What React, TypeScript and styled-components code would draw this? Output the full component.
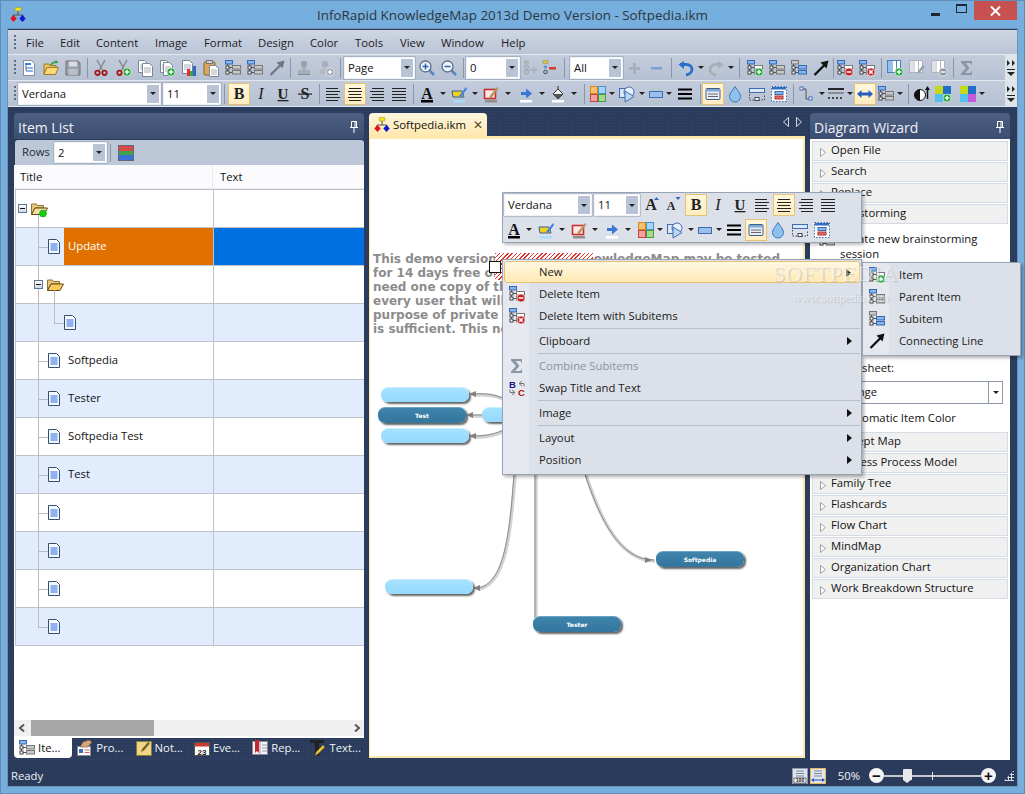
import React from 'react';
import styled, { createGlobalStyle } from 'styled-components';

const UI = '"Open Sans", "Noto Sans", sans-serif';
const TEXT_SIZE = '11.3px';

const GlobalStyle = createGlobalStyle`
  html, body { margin: 0; padding: 0; }
  body { width: 1025px; height: 794px; overflow: hidden; font-family: ${UI}; }
`;

/* ---------- icon drawings (16x16) ---------- */
const BLUE = '#86b6f0';
const GREY = '#c9c9c9';

const tree = (a: string, b: string, c: string) => (
  <>
    <rect x="0.5" y="0.5" width="7" height="3.5" fill={a} stroke={a === BLUE ? '#3a68ae' : '#777'} />
    <path d="M2.5 4v8M2.5 7.5h5M2.5 12.5h5" stroke="#555" fill="none" />
    <rect x="1" y="6" width="3" height="3" fill="#fff" stroke="#444" />
    <rect x="1" y="11" width="3" height="3" fill="#fff" stroke="#444" />
    <rect x="7.5" y="5.5" width="8" height="3.5" fill={b} stroke={b === BLUE ? '#3a68ae' : '#777'} />
    <rect x="7.5" y="10.5" width="8" height="3.5" fill={c} stroke={c === BLUE ? '#3a68ae' : '#777'} />
  </>
);
const badge = (fill: string, glyph: string) => (
  <>
    <circle cx="12" cy="12" r="4" fill={fill} stroke="#fff" strokeWidth="0.6" />
    <path d={glyph} stroke="#fff" strokeWidth="1.5" fill="none" />
  </>
);
const PLUS = 'M9.7 12h4.6M12 9.7v4.6';
const MINUS = 'M9.7 12h4.6';
const CROSS = 'M10.3 10.3l3.4 3.4M13.7 10.3l-3.4 3.4';
const page = (x: number, y: number, w: number, h: number) => (
  <>
    <path d={`M${x + 0.5} ${y + 0.5}h${w - 3}l3 3v${h - 3}h-${w}z`} fill="#fff" stroke="#7b8796" />
    <path d={`M${x + 2} ${y + 5}h${w - 3}M${x + 2} ${y + 7}h${w - 3}M${x + 2} ${y + 9}h${w - 3}`} stroke="#a8b0bb" />
  </>
);
const scissors = (
  <>
    <path d="M4 0l5.5 10M12 0L6.5 10" stroke="#83878d" strokeWidth="1.4" fill="none" />
    <circle cx="4.5" cy="12.8" r="2.2" stroke="#a31515" strokeWidth="1.8" fill="none" />
    <circle cx="11.5" cy="12.8" r="2.2" stroke="#a31515" strokeWidth="1.8" fill="none" />
  </>
);
const arrow = (c: string) => (
  <>
    <path d="M1.5 15L11 5.5" stroke={c} strokeWidth="2.3" />
    <path d="M7.5 2.5L15.5.5 13.5 8.5z" fill={c} />
  </>
);
const lines = (d: string) => <path d={d} stroke="#222" strokeWidth="1" fill="none" />;
const letter = (t: string, style: 'b' | 'i' | 'plain', size = 15) => (
  <text
    x="8"
    y="12.5"
    textAnchor="middle"
    fontFamily="'Liberation Serif', serif"
    fontSize={size}
    fontWeight={style === 'b' ? 700 : 400}
    fontStyle={style === 'i' ? 'italic' : 'normal'}
    fill="#222"
  >
    {t}
  </text>
);
const columns = (c: string) => (
  <>
    <rect x="0.5" y="0.5" width="13" height="12" fill="#fff" stroke={c} />
    <path d="M5 1v11M9.5 1v11" stroke={c} />
    <rect x="1" y="1" width="3.5" height="11" fill={c === '#aeb4bd' ? '#dfe2e6' : '#8fc0f2'} />
  </>
);
const tray = (c: string) => <rect x="2" y="14" width="12" height="2.5" fill={c} />;

const icons: Record<string, React.ReactNode> = {
  newdoc: (
    <>
      <path d="M2.5.5h8l3 3v12h-11z" fill="#fff" stroke="#7f8da0" />
      <rect x="4" y="3" width="6" height="2" fill="#3f7fe0" />
      <path d="M5 5v6M5 8h2M5 11h2" stroke="#667" />
      <rect x="7" y="7" width="5" height="2" fill="#86b6f0" />
      <rect x="7" y="10" width="5" height="2" fill="#86b6f0" />
    </>
  ),
  open: (
    <>
      <path d="M1 4h5l1 1.5h6V8H4l-3 6z" fill="#e9c45c" stroke="#a07a20" />
      <path d="M.8 14.5L4 7.5h11.5L12.5 14.5z" fill="#fcd977" stroke="#a07a20" />
      <path d="M8 5C9 2.5 11 2 13 2" stroke="#2fa33a" strokeWidth="1.5" fill="none" />
      <path d="M12.5 0l3 2-3 2z" fill="#2fa33a" />
    </>
  ),
  save: (
    <>
      <path d="M1 1h12l2 2v12H1z" fill="#9aa0a8" stroke="#6b7078" />
      <rect x="4" y="1.5" width="8" height="5" fill="#dadce0" />
      <rect x="3.5" y="9" width="9" height="6" fill="#bcc0c6" />
    </>
  ),
  cut: scissors,
  cutadd: (
    <>
      {scissors}
      {badge('#17a52b', PLUS)}
    </>
  ),
  copy: (
    <>
      {page(1, 0, 9, 12)}
      {page(5, 3, 10, 13)}
    </>
  ),
  copyadd: (
    <>
      {page(1, 0, 9, 12)}
      {page(4, 2, 9, 13)}
      {badge('#17a52b', PLUS)}
    </>
  ),
  pastechart: (
    <>
      {page(1, 0, 10, 13)}
      <rect x="6" y="9" width="3" height="7" fill="#d33" />
      <rect x="9" y="11" width="3" height="5" fill="#3a3" />
      <rect x="12" y="6" width="3" height="10" fill="#36c" />
    </>
  ),
  paste: (
    <>
      <rect x="1" y="2" width="11" height="13" rx="1" fill="#d9a85f" stroke="#8b6428" />
      <rect x="3.5" y="0.5" width="6" height="3" fill="#c9cfd6" stroke="#777" />
      {page(6, 5, 9, 11)}
    </>
  ),
  treeA: tree(BLUE, GREY, GREY),
  treeB: tree(GREY, BLUE, BLUE),
  treeAdd: (
    <>
      {tree(BLUE, '#fff', '#fff')}
      {badge('#17a52b', PLUS)}
    </>
  ),
  treeDel: (
    <>
      {tree(BLUE, '#fff', '#fff')}
      {badge('#c81e1e', MINUS)}
    </>
  ),
  treeX: (
    <>
      {tree(BLUE, '#fff', '#fff')}
      {badge('#c81e1e', CROSS)}
    </>
  ),
  arrowGrey: arrow('#6f7782'),
  arrowBlack: arrow('#111'),
  stamp: (
    <>
      <circle cx="8" cy="4" r="3.2" fill="#9aa1ab" />
      <path d="M6.5 7h3l1 3h3.5v3H2v-3h3.5z" fill="#a9afb8" />
      <rect x="2" y="13.5" width="12" height="1.5" fill="#858b95" />
    </>
  ),
  stampadd: (
    <>
      <circle cx="7" cy="4" r="3.2" fill="#a9afb8" />
      <path d="M1 14c0-4 2-6 6-6s5 2 5 3v3z" fill="#b6bbc3" />
      {badge('#98a0ab', PLUS)}
    </>
  ),
  zoomin: (
    <>
      <path d="M10 10l5 5" stroke="#5a84c4" strokeWidth="2.6" />
      <circle cx="6.5" cy="6.5" r="5.5" fill="#eef4fb" stroke="#5c6f88" strokeWidth="1.3" />
      <path d="M3.5 6.5h6M6.5 3.5v6" stroke="#2a62b8" strokeWidth="1.5" />
    </>
  ),
  zoomout: (
    <>
      <path d="M10 10l5 5" stroke="#5a84c4" strokeWidth="2.6" />
      <circle cx="6.5" cy="6.5" r="5.5" fill="#eef4fb" stroke="#5c6f88" strokeWidth="1.3" />
      <path d="M3.5 6.5h6" stroke="#2a62b8" strokeWidth="1.5" />
    </>
  ),
  nodesGrey: (
    <>
      <rect x="2" y="0.5" width="5" height="3" fill="#aab0b8" />
      <circle cx="4.5" cy="7" r="2" fill="none" stroke="#9aa0a8" />
      <circle cx="4.5" cy="12" r="2" fill="none" stroke="#9aa0a8" />
      <path d="M7 9h4V7h2v2h2v2h-2v2h-2v-2H7z" fill="#aeb3ba" />
    </>
  ),
  nodesMinus: (
    <>
      <rect x="2" y="0.5" width="5" height="3" fill="#e8c22c" stroke="#888" strokeWidth="0.5" />
      <circle cx="4.5" cy="7" r="1.8" fill="#6a95d8" />
      <circle cx="4.5" cy="12" r="1.8" fill="none" stroke="#445" />
      <rect x="8" y="7" width="7" height="2.5" fill="#d8392b" />
    </>
  ),
  plusMuted: <path d="M6 3h3v4h4v3H9v4H6v-4H2V7h4z" fill="#a9afb9" />,
  minusMuted: <rect x="2" y="7" width="11" height="2.5" fill="#7e9fd6" />,
  undo: (
    <>
      <path d="M2 4.5h6.5C12 4.5 14 7 14 9.5S11.5 14.5 8 15" stroke="#2a6fc9" strokeWidth="2.8" fill="none" />
      <path d="M.5 4.5L6 1v8z" fill="#2a6fc9" />
    </>
  ),
  redo: (
    <>
      <path d="M14 4.5H7.5C4 4.5 2 7 2 9.5S4.5 14.5 8 15" stroke="#a9aeb6" strokeWidth="2.8" fill="none" />
      <path d="M15.5 4.5L10 1v8z" fill="#a9aeb6" />
    </>
  ),
  colAdd: (
    <>
      {columns('#4a7fbe')}
      {badge('#17a52b', PLUS)}
    </>
  ),
  colEdit: (
    <>
      {columns('#aeb4bd')}
      <path d="M8 14l1-3 5-6 2 1.5-5 6z" fill="#9aa0a9" />
    </>
  ),
  colMinus: (
    <>
      {columns('#aeb4bd')}
      {badge('#8f959e', MINUS)}
    </>
  ),
  sigma: <path d="M2 1h11v4.5L11.5 3H6.5l4 5-4.5 5h5.5l1.5-2.5V15H2v-1.5l5-5.5-5-5.5z" fill="#8b95a3" />,
  bold: letter('B', 'b', 16),
  italic: letter('I', 'i', 16),
  under: (
    <>
      {letter('U', 'b', 15)}
      <rect x="2.5" y="14" width="11" height="1.3" fill="#222" />
    </>
  ),
  strike: (
    <>
      {letter('S', 'b', 16)}
      <rect x="1" y="7.5" width="14" height="1.2" fill="#222" />
    </>
  ),
  growA: (
    <>
      {letter('A', 'b', 16)}
      <path d="M11 3l2.5-3L16 3z" fill="#3568b8" />
    </>
  ),
  shrinkA: (
    <>
      <text x="6" y="13" textAnchor="middle" fontFamily="'Liberation Serif', serif" fontSize="12" fontWeight="700" fill="#222">A</text>
      <path d="M10.5 0h5L13 3z" fill="#3568b8" />
    </>
  ),
  alignL: lines('M1 2.5h12M1 5.5h14M1 8.5h12M1 11.5h14M1 14.5h12'),
  alignC: lines('M2 2.5h12M1 5.5h14M2 8.5h12M1 11.5h14M2 14.5h12'),
  alignR: lines('M3 2.5h12M1 5.5h14M3 8.5h12M1 11.5h14M3 14.5h12'),
  alignJ: lines('M1 2.5h14M1 5.5h14M1 8.5h14M1 11.5h14M1 14.5h14'),
  fontA: (
    <>
      <text x="8" y="12.5" textAnchor="middle" fontFamily="'Liberation Serif', serif" fontSize="16" fontWeight="700" fill="#111">A</text>
      {tray('#000')}
    </>
  ),
  hilite: (
    <>
      <path d="M1 5h10l2 6H2z" fill="#f0d21e" stroke="#365a9a" />
      <path d="M8 10l7-9 1 2-6 8z" fill="#3f7fe0" />
      {tray('#a7dcfb')}
    </>
  ),
  penbox: (
    <>
      <rect x="1.5" y="3.5" width="11" height="9" fill="#fbe9e9" stroke="#c73030" strokeWidth="1.6" />
      <path d="M6 11l8-10 1.5 1.5-7 9.5z" fill="#b9935a" />
      {tray('#8f8f8f')}
    </>
  ),
  arrowFill: (
    <>
      <path d="M3 6h5V2.5L14 7.5l-6 5V9H3z" fill="#3a78d8" />
      {tray('#fff')}
    </>
  ),
  bucket: (
    <>
      <path d="M3 8l5-5 5 5-5 5z" fill="#f2f2f2" stroke="#333" />
      <path d="M3 8h10l-5 5z" fill="#555" />
      <path d="M8 0v4" stroke="#333" />
      {tray('#fff')}
    </>
  ),
  grid4: (
    <>
      <rect x="0.5" y="0.5" width="7" height="7" fill="#f5c16c" stroke="#d08a22" />
      <rect x="8.5" y="0.5" width="7" height="7" fill="#a8d4f7" stroke="#4a90d0" />
      <rect x="0.5" y="8.5" width="7" height="7" fill="#f2a0a0" stroke="#c84040" />
      <rect x="8.5" y="8.5" width="7" height="7" fill="#a4d88f" stroke="#4a9a40" />
    </>
  ),
  shape: (
    <>
      <rect x="0.5" y="2.5" width="9" height="9" fill="#dbe8f8" stroke="#3f6db3" />
      <circle cx="10" cy="6" r="5" fill="#eaf2fb" stroke="#3f6db3" />
      <path d="M6 5l9 5.5-9 5.5z" fill="#bcd6f3" stroke="#3f6db3" />
    </>
  ),
  flatRect: <rect x="1.5" y="5.5" width="13" height="6" fill="#9cc0ec" stroke="#3f6db3" />,
  thick: <path d="M1 3.5h14M1 8h14M1 12.5h14" stroke="#000" strokeWidth="2.2" />,
  card: (
    <>
      <rect x="1" y="2.5" width="14" height="11" rx="1" fill="#e9eef4" stroke="#3f5f8a" />
      <rect x="1.5" y="3" width="13" height="2.5" fill="#7fa6d8" />
      <path d="M3 8h10M3 10.5h10" stroke="#667" />
    </>
  ),
  water: <path d="M8 .5C10 4 13.5 7 13.5 10.5a5.5 5.5 0 0 1-11 0C2.5 7 6 4 8 .5z" fill="#8fc1ef" stroke="#3b78bf" />,
  layoutA: (
    <>
      <rect x="0.5" y="2.5" width="15" height="4" fill="#dbe8f8" stroke="#3f6db3" />
      <path d="M.5 8v6h15V8" fill="none" stroke="#445" strokeDasharray="1.5 1.5" />
      <rect x="6" y="11.5" width="4" height="3" fill="#fff" stroke="#445" />
    </>
  ),
  layoutB: (
    <>
      <rect x="0.5" y="0.5" width="15" height="15" fill="#fff" stroke="#3f6db3" strokeDasharray="1.5 1.5" />
      <rect x="1" y="1" width="14" height="2.5" fill="#2f6dbf" />
      <rect x="4" y="5.5" width="8" height="3" fill="#86b6f0" stroke="#3f6db3" />
      <rect x="4" y="10" width="8" height="3" fill="#e07070" stroke="#b03030" />
    </>
  ),
  connector: (
    <>
      <rect x="1" y="1" width="3" height="3" fill="#fff" stroke="#3f6db3" />
      <path d="M4 3h3v10h3" stroke="#555" fill="none" />
      <rect x="10" y="11" width="3" height="3" fill="#fff" stroke="#3f6db3" />
    </>
  ),
  lineStyle: (
    <>
      <path d="M0 3h16" stroke="#111" strokeWidth="1.8" />
      <path d="M0 7h16" stroke="#555" />
      <path d="M0 12h16" stroke="#444" strokeDasharray="2 2" strokeWidth="2" />
    </>
  ),
  hArrows: <path d="M0 8l4.5-4v2.5h7V4L16 8l-4.5 4V9.5h-7V12z" fill="#2a5fc0" />,
  contrast: (
    <>
      <circle cx="6" cy="9" r="5.5" fill="#fff" stroke="#111" />
      <path d="M6 3.5a5.5 5.5 0 0 0 0 11z" fill="#111" />
      <path d="M13.5 13V3" stroke="#111" strokeWidth="1.5" />
      <path d="M11 4l2.5-4L16 4z" fill="#111" />
    </>
  ),
  colorAdd: (
    <>
      <rect x="0" y="0" width="8" height="8" fill="#c6d81a" />
      <rect x="8" y="0" width="8" height="8" fill="#1f6fc8" />
      <rect x="0" y="8" width="8" height="8" fill="#55c0ef" />
      {badge('#17a52b', PLUS)}
    </>
  ),
  colors: (
    <>
      <rect x="0" y="0" width="8" height="8" fill="#c6d81a" />
      <rect x="8" y="0" width="8" height="8" fill="#1f6fc8" />
      <rect x="0" y="8" width="8" height="8" fill="#55c0ef" />
      <rect x="8" y="8" width="8" height="8" fill="#c55ad8" />
    </>
  ),
  swap: (
    <>
      <text x="0" y="8" fontFamily="'Liberation Sans', sans-serif" fontSize="9.5" fontWeight="700" fill="#10108a">B</text>
      <text x="9" y="16" fontFamily="'Liberation Sans', sans-serif" fontSize="9.5" fontWeight="700" fill="#b01010">C</text>
      <path d="M13 1L10 3.5 13 6M10 3.5h5v3" stroke="#777" fill="none" />
      <path d="M3 15l3-2.5L3 10M6 12.5H1v-3" stroke="#777" fill="none" />
    </>
  ),
  hand: (
    <>
      <rect x="0.5" y="6.5" width="13" height="9" fill="#fff" stroke="#889" />
      <rect x="2" y="9" width="4" height="4" fill="#3f6db3" />
      <path d="M7.5 10h5M7.5 12.5h5" stroke="#c66" />
      <path d="M3 7l3-5 6-2 3 2-4 5z" fill="#d3a57a" stroke="#7a5430" strokeWidth="0.6" />
    </>
  ),
  note: (
    <>
      <rect x="0.5" y="1.5" width="15" height="14" fill="#f0d684" stroke="#8b7a40" />
      <path d="M5 12l1-3 6-7 2 1.5-6 7z" fill="#7d6330" />
    </>
  ),
  calendar: (
    <>
      <rect x="0.5" y="2.5" width="15" height="13" fill="#fff" stroke="#555" />
      <rect x="1" y="3" width="14" height="3.5" fill="#c83a32" />
      <text x="8" y="14.5" textAnchor="middle" fontFamily="'Liberation Sans', sans-serif" fontSize="8" fontWeight="700" fill="#222">23</text>
    </>
  ),
  book: (
    <>
      <rect x="0.5" y="1.5" width="15" height="13" fill="#f2f4f8" stroke="#889" />
      <path d="M8 2v12M10 5h5M10 8h5M10 11h5" stroke="#99a" />
      <path d="M3 0h4v13l-2-2-2 2z" fill="#c8252a" />
    </>
  ),
  tPen: (
    <>
      <path d="M0 0h14v3H9v13H5V3H0z" fill="#222" />
      <path d="M5 16l1-4 7-7 2 2-7 7z" fill="#e8c23a" stroke="#6a5410" strokeWidth="0.6" />
    </>
  ),
  page100: (
    <>
      <path d="M4 3h8M4 5.5h8M4 8h8" stroke="#7c8796" />
      <rect x="2" y="10" width="12" height="5" fill="#fff" stroke="#222" strokeWidth="0.6" />
      <text x="8" y="14.3" textAnchor="middle" fontFamily="'Liberation Sans', sans-serif" fontSize="5" fontWeight="700" fill="#111">100</text>
    </>
  ),
  pageFit: (
    <>
      <path d="M4 3h8M4 5.5h8M4 8h8" stroke="#7c8796" />
      <path d="M1 12l3-2v1.5h8V10l3 2-3 2v-1.5H4V14z" fill="#2a4fb8" />
    </>
  ),
};

const Icon = ({ name, size = 16 }: { name: string; size?: number }) => (
  <svg width={size} height={size} viewBox="0 0 16 16" style={{ display: 'block', overflow: 'visible', flexShrink: 0 }}>
    {icons[name]}
  </svg>
);

const Logo = () => (
  <svg width="16" height="16" viewBox="0 0 16 16" style={{ display: 'block', flexShrink: 0 }}>
    <path d="M8 4v4M3 10V8h10v2" stroke="#555" fill="none" />
    <rect x="5" y="0.5" width="6" height="3.5" rx="1" fill="#f4e21a" stroke="#9a8c10" strokeWidth="0.5" />
    <path d="M3.5 8l3.2 3.5-3.2 3.5L.3 11.5z" fill="#e0141c" />
    <path d="M12.5 8l3.2 3.5-3.2 3.5-3.2-3.5z" fill="#1414d8" />
  </svg>
);

const DocGlyph = () => (
  <svg width="12" height="15" viewBox="0 0 12 15" style={{ display: 'block', flexShrink: 0 }}>
    <path d="M.5.5h8l3 3v11H.5z" fill="#f4f8ff" stroke="#33506f" />
    <path d="M2.5 5h7M2.5 7h7M2.5 9h7M2.5 11h7" stroke="#2a6ae0" />
  </svg>
);

const FolderGlyph = ({ dot }: { dot?: boolean }) => (
  <svg width="17" height="14" viewBox="0 0 17 14" style={{ display: 'block', overflow: 'visible', flexShrink: 0 }}>
    <path d="M.5 2h5l1 1.5h6V6H4L.5 12.5z" fill="#e8c77a" stroke="#8d7434" />
    <path d="M.5 12.5L4 6h12.5L13 12.5z" fill={dot ? '#f3dda0' : '#fbc95c'} stroke="#5f4b16" />
    {dot && <circle cx="12" cy="11.5" r="3.5" fill="#12d012" stroke="#0a8a0a" strokeWidth="0.5" />}
  </svg>
);

/* ---------- window frame ---------- */
const Window = styled.div`
  position: relative;
  width: 1025px;
  height: 794px;
  display: flex;
  flex-direction: column;
  background: #76aedd;
  box-shadow: inset 0 0 0 1px #5f8db5;
  overflow: hidden;
`;

const TitleBar = styled.div`
  height: 29px;
  flex: none;
  display: grid;
  grid-template-columns: 1fr auto 1fr;
  align-items: start;
`;

const TitleLogo = styled.div`
  padding: 7px 0 0 10px;
`;

const TitleText = styled.div`
  font-size: 13.4px;
  line-height: 30px;
  color: #2c3640;
`;

const WindowButtons = styled.div`
  justify-self: end;
  display: flex;
  padding: 1px 8px 0 0;
`;

const WinButton = styled.div<{ $w: number }>`
  width: ${p => p.$w}px;
  height: 19px;
  display: flex;
  align-items: center;
  justify-content: center;
`;

const CloseButton = styled(WinButton)`
  background: #c75050;
`;

const MinGlyph = styled.div`
  width: 9px;
  height: 3px;
  background: #1c2733;
  margin-top: 7px;
`;

const MaxGlyph = styled.div`
  width: 9px;
  height: 6px;
  border: 1px solid #1c2733;
  border-top-width: 2px;
  margin-top: -4px;
`;

const Client = styled.div`
  flex: 1;
  margin: 0 8px 8px;
  display: flex;
  flex-direction: column;
  min-height: 0;
  background: #2b3b5b;
  box-shadow: 0 0 0 1px #6f93b8;
`;

/* ---------- menu and toolbars ---------- */
const MenuBar = styled.div`
  height: 25px;
  margin-top: 1px;
  display: flex;
  align-items: center;
  background: linear-gradient(#d0d6e3, #b9c4d6);
  border-bottom: 1px solid #e4e8ef;
  box-sizing: border-box;
  font-size: ${TEXT_SIZE};
  color: #1c1c1c;
`;

const Gripper = styled.div`
  flex: none;
  width: 2px;
  height: 15px;
  margin: 0 2px 0 6px;
  background: repeating-linear-gradient(#5e6b80 0 2px, transparent 2px 4px);
`;

const MenuEntry = styled.div<{ $w: number }>`
  flex: none;
  width: ${p => p.$w}px;
`;

const MenuStart = styled.div`
  width: 8px;
  flex: none;
`;

const ToolBar = styled.div`
  height: 26px;
  display: flex;
  align-items: center;
  background: linear-gradient(#c4ccdb, #b5c1d3);
  border-bottom: 1px solid #e2e6ee;
  box-sizing: border-box;
`;

const ToolEnd = styled.div`
  margin-left: auto;
  width: 12px;
  height: 100%;
  display: flex;
  flex-direction: column;
  align-items: center;
  justify-content: center;
  gap: 3px;
  background: #dfe3ea;
`;

const ToolButton = styled.div<{ $w: number; $on?: boolean }>`
  flex: none;
  box-sizing: border-box;
  width: ${p => p.$w}px;
  height: 22px;
  display: flex;
  align-items: center;
  justify-content: center;
  ${p => p.$on && 'background: linear-gradient(#fff6dc, #ffedc0); border: 1px solid #e8c274;'}
`;

const Sep = styled.div<{ $w: number }>`
  flex: none;
  width: ${p => p.$w}px;
  height: 20px;
  background: linear-gradient(#8b96a8, #8b96a8) center / 1px 100% no-repeat;
`;

const Spacer = styled.div<{ $w: number }>`
  flex: none;
  width: ${p => p.$w}px;
`;

const DropMark = styled.div<{ $w: number }>`
  flex: none;
  width: ${p => p.$w}px;
  display: flex;
  justify-content: center;
  &::after {
    content: '';
    border: 3px solid transparent;
    border-top: 3px solid #222;
    border-bottom: 0;
  }
`;

const ComboBox = styled.div<{ $w: number }>`
  flex: none;
  box-sizing: border-box;
  width: ${p => p.$w}px;
  height: 22px;
  display: flex;
  background: #fff;
  border: 1px solid #eef1f5;
  box-shadow: 0 0 0 0.5px #8d99ab;
  font-size: ${TEXT_SIZE};
  color: #111;
`;

const ComboText = styled.div`
  flex: 1;
  padding-left: 3px;
  line-height: 20px;
  white-space: nowrap;
  overflow: hidden;
`;

const ComboArrow = styled.div`
  flex: none;
  width: 12px;
  margin: 1px;
  background: #b8c4d6;
  display: flex;
  align-items: center;
  justify-content: center;
  &::after {
    content: '';
    border: 3px solid transparent;
    border-top: 3px solid #222;
    border-bottom: 0;
  }
`;

const Tools = ({ tokens }: { tokens: string }) => (
  <>
    {tokens.split(' ').map((tok, i) => {
      if (tok[0] === '|') return <Sep key={i} $w={+tok.slice(1)} />;
      if (tok[0] === '_') return <Spacer key={i} $w={+tok.slice(1)} />;
      if (tok[0] === 'v') return <DropMark key={i} $w={+(tok.split(':')[1] || 8)} />;
      if (tok[0] === '[') {
        const [label, w] = tok.slice(1, -1).split(':');
        return (
          <ComboBox key={i} $w={+w}>
            <ComboText>{label}</ComboText>
            <ComboArrow />
          </ComboBox>
        );
      }
      const on = tok[0] === '*';
      const [name, w] = tok.replace('*', '').split(':');
      return (
        <ToolButton key={i} $w={+(w || 22)} $on={on}>
          <Icon name={name} />
        </ToolButton>
      );
    })}
  </>
);

const EndMark = () => (
  <ToolEnd>
    <svg width="8" height="6" viewBox="0 0 8 6">
      <path d="M0 0l3 3-3 3zM5 0l3 3-3 3z" fill="#222" />
    </svg>
    <svg width="8" height="7" viewBox="0 0 8 7">
      <path d="M0 0h8v1H0zM0 3h8L4 7z" fill="#222" />
    </svg>
  </ToolEnd>
);

const toolOne =
  'newdoc open save |6 cut cutadd copy copyadd pastechart paste treeA treeA arrowGrey |5 stamp stampadd |7 [Page:71] _1 zoomin zoomout |6 [0:54] nodesGrey:20 nodesMinus:18 |12 [All:53] _1 plusMuted minusMuted |7 undo v redo v |9 treeAdd treeA treeB arrowBlack |2 treeDel treeX |6 colAdd colEdit colMinus |6 sigma';
const toolTwo =
  '[Verdana:143] _2 [11:58] |7 *bold italic under strike |6 alignL *alignC alignR alignJ |6 fontA v:10 hilite v:10 penbox v:12 _1 arrowFill v:10 bucket v:10 |10 grid4:18 v:10 shape:20 v:9 flatRect:20 v:6 thick:26 |4 *card water layoutA layoutB |7 connector:20 v:9 lineStyle:20 v:8 *hArrows treeA:20 v |8 contrast:20 colorAdd _4 colors:20 v';
const miniOne = '_1 [Verdana:88] _2 [11:46] growA shrinkA _1 *bold italic under alignL *alignC alignR alignJ';
const miniTwo =
  'fontA v:8 _2 hilite v:10 _1 penbox v:10 _1 arrowFill v:10 _2 grid4 v:6 _1 shape _1 v:7 flatRect v:6 _1 thick *card water layoutA layoutB';

/* ---------- shared docking panel parts ---------- */
const Main = styled.div`
  flex: 1;
  min-height: 0;
  display: grid;
  grid-template-columns: 350px 436px 200px;
  column-gap: 5px;
  padding: 6px 0 0 6px;
  background-color: #2b3b5b;
  background-image: radial-gradient(#34466a 0.7px, transparent 0.8px);
  background-size: 3px 3px;
`;

const Panel = styled.section<{ $bottom: number }>`
  display: flex;
  flex-direction: column;
  margin-bottom: ${p => p.$bottom}px;
  min-height: 0;
`;

const PanelHead = styled.header`
  flex: none;
  height: 26px;
  display: flex;
  align-items: center;
  justify-content: space-between;
  padding: 2px 6px 0 4px;
  box-sizing: border-box;
  border-radius: 4px 4px 0 0;
  background: linear-gradient(#4d6082, #3b4d70);
  color: #eef2f8;
  font-size: 14px;
`;

const PinIcon = () => (
  <svg width="8" height="12" viewBox="0 0 8 12">
    <path d="M1.5.5h5v6h-5zM0 6.5h8M4 7v5M5 1v5" stroke="#fff" fill="none" />
  </svg>
);

const RowsBar = styled.div`
  flex: none;
  height: 25px;
  margin: 1px 0 0 1px;
  display: flex;
  align-items: center;
  gap: 3px;
  padding-left: 7px;
  box-sizing: border-box;
  background: #bcc8d8;
  border-radius: 3px 3px 0 0;
  font-size: ${TEXT_SIZE};
  color: #1f2a38;
`;

const RowsCaption = styled.span`
  width: 29px;
  padding-bottom: 2px;
`;

const RowsCombo = styled(ComboBox)`
  height: 21px;
`;

const RowsSep = styled.div`
  width: 1px;
  height: 18px;
  margin-right: 4px;
  background: #8b96a8;
`;

const Swatch = styled.div`
  width: 14px;
  height: 14px;
  background: linear-gradient(#d84a4a 0 33%, #3fa14a 33% 66%, #3a70d8 66%);
  border: 0.5px solid #667;
`;

const ListBody = styled.div`
  flex: 1;
  min-height: 0;
  display: flex;
  flex-direction: column;
  background: #fff;
`;

const HeadRow = styled.div`
  flex: none;
  height: 24px;
  display: grid;
  grid-template-columns: 198px 1fr;
  background: #fbfbfd;
  font-size: ${TEXT_SIZE};
  color: #111;
`;

const HeadCell = styled.div`
  padding: 2px 0 0 6px;
  line-height: 19px;
  border-bottom: 1px solid #e6edf6;
  & + & {
    border-left: 1px solid #e6edf6;
    padding-left: 7px;
  }
`;

const Rows = styled.div`
  flex: 1;
  margin-left: 1px;
`;

const Row = styled.div<{ $alt: boolean }>`
  height: 38px;
  box-sizing: border-box;
  display: grid;
  grid-template-columns: 197px 1fr;
  border-top: 1px solid #bfc3c9;
  border-left: 1px solid #bfc3c9;
  background: ${p => (p.$alt ? '#e1edfd' : '#fff')};
  font-size: ${TEXT_SIZE};
  color: #111;
  &:last-child {
    height: 39px;
    border-bottom: 1px solid #bfc3c9;
  }
`;

const TitleCell = styled.div<{ $pad: number }>`
  position: relative;
  display: flex;
  align-items: center;
  gap: 4px;
  padding-left: ${p => p.$pad}px;
  min-width: 0;
`;

const TextCell = styled.div<{ $sel: boolean }>`
  border-left: 1px solid #bfc3c9;
  background: ${p => (p.$sel ? '#0070e0' : 'transparent')};
`;

const Guide = styled.div<{ $l: number; $t: number; $w?: number; $h?: number }>`
  position: absolute;
  left: ${p => p.$l}px;
  top: ${p => p.$t}px;
  width: ${p => p.$w ?? 1}px;
  height: ${p => p.$h ?? 1}px;
  background: #bdbdbd;
`;

const ExpandBox = styled.div`
  position: relative;
  flex: none;
  width: 9px;
  height: 9px;
  box-sizing: border-box;
  border: 1px solid #5a7796;
  background: linear-gradient(#fff, #cfd8e2);
  &::after {
    content: '';
    position: absolute;
    left: 1px;
    right: 1px;
    top: 3px;
    height: 1px;
    background: #111;
  }
`;

const ItemLabel = styled.div<{ $sel: boolean }>`
  flex: 1;
  align-self: stretch;
  display: flex;
  align-items: center;
  padding: 0 0 2px 4px;
  ${p => p.$sel && 'background: #e07000; color: #fff;'}
`;

const ScrollBar = styled.div`
  flex: none;
  height: 16px;
  margin-bottom: 2px;
  display: flex;
  align-items: center;
  justify-content: space-between;
  padding: 0 3px 0 4px;
  background: #f0f0f0;
  position: relative;
`;

const ScrollThumb = styled.div`
  position: absolute;
  left: 17px;
  top: 0;
  width: 123px;
  height: 16px;
  background: #a6a6a6;
`;

const TabStrip = styled.div`
  flex: none;
  height: 20px;
  display: flex;
  background-color: #2b3b5b;
  background-image: radial-gradient(#34466a 0.7px, transparent 0.8px);
  background-size: 3px 3px;
`;

const SideTab = styled.div<{ $on?: boolean }>`
  width: 58.3px;
  height: 20px;
  flex: none;
  box-sizing: border-box;
  display: flex;
  align-items: center;
  gap: 3px;
  padding: 0 0 1px 5px;
  font-size: ${TEXT_SIZE};
  white-space: nowrap;
  color: ${p => (p.$on ? '#111' : '#f0f3f8')};
  background: ${p => (p.$on ? '#fff' : 'transparent')};
  border-radius: 0 0 4px 4px;
`;

/* ---------- document ---------- */
const DocTabRow = styled.div`
  flex: none;
  height: 23px;
  display: flex;
  align-items: stretch;
  justify-content: space-between;
`;

const DocTab = styled.div`
  width: 118px;
  box-sizing: border-box;
  display: flex;
  align-items: center;
  gap: 3px;
  padding: 0 0 0 5px;
  border-radius: 4px 4px 0 0;
  background: linear-gradient(#fff7e0, #ffe8ae);
  font-size: 11.4px;
  color: #111;
`;

const TabClose = styled.span`
  margin-left: 4px;
  color: #5a4a2a;
  font-size: 12px;
  font-family: 'Liberation Sans', sans-serif;
`;

const NavArrows = styled.div`
  display: flex;
  align-items: center;
  gap: 7px;
  padding: 0 3px 6px 0;
`;

const DocFrame = styled.div`
  flex: 1;
  min-height: 0;
  box-sizing: border-box;
  border: 1px solid #ffe8ae;
  border-width: 3px 2px 2px 1px;
  background: #fff;
`;

const Canvas = styled.div`
  position: relative;
  width: 100%;
  height: 100%;
  overflow: hidden;
`;

const DemoText = styled.div`
  position: absolute;
  left: 3px;
  top: 113px;
  width: 430px;
  font-family: 'DejaVu Sans', Verdana, sans-serif;
  font-weight: 700;
  font-size: 12px;
  line-height: 14px;
  color: #8c8c8c;
  white-space: nowrap;
`;

/* the middle of the first line sits under the selection hatch */
const HatchedWords = styled.span`
  letter-spacing: -1px;
`;

const Hatch = styled.div`
  position: absolute;
  left: 125px;
  top: 114px;
  width: 98px;
  height: 27px;
  background: repeating-linear-gradient(135deg, #e8312a 0 1px, #fff 1px 3px);
`;

const Handle = styled.div`
  position: absolute;
  left: 119px;
  top: 122px;
  width: 10px;
  height: 10px;
  background: #fff;
  border: 1px solid #111;
`;

const Wires = styled.svg`
  position: absolute;
  left: 0;
  top: 0;
`;

const MapNode = styled.div<{ $x: number; $y: number; $w: number; $dark?: boolean }>`
  position: absolute;
  left: ${p => p.$x - 370}px;
  top: ${p => p.$y - 139}px;
  width: ${p => p.$w}px;
  height: ${p => (p.$dark ? 16 : 15)}px;
  box-sizing: border-box;
  border-radius: 7px;
  text-align: center;
  font-family: 'DejaVu Sans', Verdana, sans-serif;
  font-size: 6px;
  font-weight: 700;
  line-height: 15px;
  color: #fff;
  background: ${p => (p.$dark ? 'linear-gradient(#3e84ab, #34769d)' : 'linear-gradient(#a6e2ff, #94d8fd)')};
  border-top: 1px solid ${p => (p.$dark ? '#6aa3c4' : '#c8efff')};
  box-shadow: 2px 2px 2px #666;
`;

/* ---------- wizard ---------- */
const WizardBody = styled.div`
  flex: 1;
  min-height: 0;
  background: #fff;
  padding: 2px 2px 0;
  display: flex;
  flex-direction: column;
  font-size: ${TEXT_SIZE};
  color: #111;
`;

const Fold = styled.div`
  flex: none;
  height: 20px;
  margin-bottom: 1px;
  box-sizing: border-box;
  display: flex;
  align-items: center;
  gap: 5px;
  padding: 0 0 4px 7px;
  background: #f0f0f0;
  border: 1px solid #d5dbe5;
`;

const FoldArrow = () => (
  <svg width="6" height="9" viewBox="0 0 6 9" style={{ flex: 'none', marginTop: 6 }}>
    <path d="M.5.5l5 4-5 4z" fill="#fff" stroke="#a0a0a0" />
  </svg>
);

const WizardRow = styled.div`
  display: flex;
  gap: 5px;
  padding: 6px 6px 0 7px;
  height: 136px;
  box-sizing: border-box;
  line-height: 15px;
`;

const WizardLabel = styled.div`
  padding-left: 25px;
  line-height: 14px;
  height: 15px;
`;

const StyleSelect = styled.div`
  margin: 5px 5px 0 7px;
  height: 23px;
  flex: none;
  box-sizing: border-box;
  display: flex;
  border: 1px solid #8d99ab;
`;

const StyleValue = styled.div`
  flex: 1;
  padding-left: 18px;
  line-height: 20px;
`;

const StyleArrow = styled(ComboArrow)`
  background: #fff;
  border-left: 1px solid #8d99ab;
  margin: 0;
  width: 13px;
`;

const AutoColor = styled.label`
  display: flex;
  align-items: center;
  gap: 11px;
  height: 28px;
  flex: none;
  padding: 0 0 1px 8px;
  box-sizing: border-box;
`;

const Check = styled.span`
  width: 13px;
  height: 13px;
  box-sizing: border-box;
  border: 1px solid #777;
  background: #fff;
`;

/* ---------- popups ---------- */
const MiniBar = styled.div`
  position: absolute;
  left: 502px;
  top: 192px;
  width: 360px;
  height: 51px;
  box-sizing: border-box;
  display: flex;
  flex-direction: column;
  justify-content: space-around;
  background: #dce1e9;
  border: 1px solid #98a4b6;
  box-shadow: 2px 2px 3px rgba(0, 0, 0, 0.25);
  z-index: 5;
`;

const MiniRow = styled.div`
  display: flex;
  align-items: center;
`;

const PopMenu = styled.div<{ $x: number; $y: number; $w: number; $gutter: number }>`
  position: absolute;
  left: ${p => p.$x}px;
  top: ${p => p.$y}px;
  width: ${p => p.$w}px;
  box-sizing: border-box;
  padding: 1px 1px 3px;
  background: linear-gradient(90deg, #e5e9ef ${p => p.$gutter}px, #dce1e9 ${p => p.$gutter}px);
  border: 1px solid #98a4b6;
  box-shadow: 2px 2px 3px rgba(0, 0, 0, 0.3);
  font-size: ${TEXT_SIZE};
  color: #1a1a1a;
  z-index: 6;
`;

const PopItem = styled.div<{ $on?: boolean; $off?: boolean; $text: number }>`
  position: relative;
  height: 22px;
  box-sizing: border-box;
  display: flex;
  align-items: center;
  padding: 0 0 2px ${p => p.$text}px;
  color: ${p => (p.$off ? '#8d929a' : 'inherit')};
  ${p =>
    p.$on &&
    'background: linear-gradient(#fff8e2, #ffe9b3); border: 1px solid #e8c274; border-radius: 3px;'}
`;

const PopIcon = styled.div`
  position: absolute;
  left: 5px;
  top: 3px;
`;

const SubArrow = styled.div`
  position: absolute;
  right: 8px;
  top: 7px;
  border: 4px solid transparent;
  border-left: 5px solid #111;
  border-right: 0;
`;

const PopSep = styled.div`
  height: 1px;
  margin: 1px 0 1px 34px;
  background: #b7bfcc;
`;

const Watermark = styled.div`
  position: absolute;
  left: 773px;
  top: 261px;
  z-index: 7;
  font-family: 'Liberation Serif', serif;
  font-size: 22px;
  letter-spacing: 0.8px;
  color: rgba(255, 255, 255, 0.5);
  text-shadow: 1px 1px 1px rgba(110, 120, 135, 0.3);
  white-space: nowrap;
  pointer-events: none;
`;

const WatermarkUrl = styled.div`
  font-size: 12px;
  letter-spacing: 0;
  line-height: 12px;
  padding: 5px 0 0 20px;
`;

/* ---------- status bar ---------- */
const StatusBar = styled.footer`
  flex: none;
  height: 26px;
  box-sizing: border-box;
  padding: 5px 0 0 3px;
  display: flex;
  align-items: center;
  background: #2b3b5b;
  color: #f0f3f8;
  font-size: ${TEXT_SIZE};
`;

const ZoomArea = styled.div`
  margin-left: auto;
  display: flex;
  align-items: center;
  height: 100%;
`;

const PageMode = styled.div<{ $on?: boolean }>`
  width: 16px;
  height: 16px;
  box-sizing: border-box;
  margin-right: 2px;
  background: #dfe5ee;
  border: 1px solid ${p => (p.$on ? '#e4b860' : '#8d99ab')};
  svg {
    margin: -1px;
  }
`;

const ZoomValue = styled.div`
  width: 32px;
  text-align: right;
  margin-right: 9px;
`;

const ZoomRound = styled.div`
  width: 15px;
  height: 15px;
  flex: none;
  border-radius: 50%;
  background: #f4f4f4;
  color: #111;
  display: flex;
  align-items: center;
  justify-content: center;
  font: 700 15px/15px 'Liberation Sans', sans-serif;
`;

const ZoomTrack = styled.div`
  position: relative;
  width: 97px;
  height: 2px;
  background: #c4c8ce;
`;

const ZoomThumb = styled.div`
  position: absolute;
  left: 19px;
  top: -6px;
  width: 9px;
  height: 11px;
  background: #e8e8e8;
  border-radius: 1px 1px 0 0;
  &::after {
    content: '';
    position: absolute;
    left: 0;
    top: 11px;
    border: 4.5px solid transparent;
    border-top: 3px solid #e8e8e8;
    border-bottom: 0;
  }
`;

const ZoomTick = styled.div`
  position: absolute;
  left: 48px;
  top: -3px;
  width: 1px;
  height: 8px;
  background: #e8e8e8;
`;

const Grip = styled.div`
  width: 10px;
  height: 11px;
  margin: 0 3px 0 8px;
  background: radial-gradient(#d8dce4 1px, transparent 1.2px) 0 0 / 3px 3px;
  clip-path: polygon(100% 0, 100% 100%, 0 100%);
`;

/* ---------- data ---------- */
const menus: [string, number][] = [
  ['File', 34],
  ['Edit', 36],
  ['Content', 59],
  ['Image', 49],
  ['Format', 54],
  ['Design', 52],
  ['Color', 45],
  ['Tools', 45],
  ['View', 41],
  ['Window', 60],
  ['Help', 40],
];

const listRows = [
  { pad: 2, kind: 'root', text: '' },
  { pad: 32, kind: 'doc', text: 'Update', sel: true },
  { pad: 18, kind: 'folder', text: '' },
  { pad: 48, kind: 'sub', text: '' },
  { pad: 32, kind: 'doc', text: 'Softpedia' },
  { pad: 32, kind: 'doc', text: 'Tester' },
  { pad: 32, kind: 'doc', text: 'Softpedia Test' },
  { pad: 32, kind: 'doc', text: 'Test' },
  { pad: 32, kind: 'doc', text: '' },
  { pad: 32, kind: 'doc', text: '' },
  { pad: 32, kind: 'doc', text: '' },
  { pad: 32, kind: 'doc', text: '' },
];

const sideTabs: [string, string][] = [
  ['hand', 'Pro...'],
  ['note', 'Not...'],
  ['calendar', 'Eve...'],
  ['book', 'Rep...'],
  ['tPen', 'Text...'],
];

const foldsTop = ['Open File', 'Search', 'Replace', 'Brainstorming'];
const foldsBottom = [
  'Concept Map',
  'Business Process Model',
  'Family Tree',
  'Flashcards',
  'Flow Chart',
  'MindMap',
  'Organization Chart',
  'Work Breakdown Structure',
];

/* only what shows beside the context menu */
const demoLines = [
  'for 14 days free of',
  'need one copy of the',
  'every user that will',
  'purpose of private use',
  'is sufficient. This note',
];

const wires = [
  'M515 405C500 395 490 393 473 394',
  'M482 415L470 415',
  'M512 425C500 433 490 436 473 436',
  'M514 474C510 530 505 585 477 588',
  'M535 474L535 617',
  'M585 474C600 520 620 560 654 560',
];

const wireTips = ['469,394 476,391 476,397', '466,415 473,412 473,418', '469,436 476,433 476,439', '473,588 480,585 480,591', '652,560 645,557 645,563'];

const mainMenu = [
  { text: 'New', on: true, sub: true },
  { text: 'Delete Item', icon: 'treeDel' },
  { text: 'Delete Item with Subitems', icon: 'treeX' },
  { sep: true },
  { text: 'Clipboard', sub: true },
  { sep: true },
  { text: 'Combine Subitems', icon: 'sigma', off: true },
  { text: 'Swap Title and Text', icon: 'swap' },
  { sep: true },
  { text: 'Image', sub: true },
  { sep: true },
  { text: 'Layout', sub: true },
  { text: 'Position', sub: true },
];

const subMenu = [
  { text: 'Item', icon: 'treeAdd' },
  { text: 'Parent Item', icon: 'treeA' },
  { text: 'Subitem', icon: 'treeB' },
  { text: 'Connecting Line', icon: 'arrowBlack' },
];

const NavTriangle = ({ flip }: { flip?: boolean }) => (
  <svg width="6" height="10" viewBox="0 0 6 10" style={{ transform: flip ? 'scaleX(-1)' : undefined }}>
    <path d="M.5.5l5 4.5-5 4.5z" fill="none" stroke="#d5dbe5" />
  </svg>
);

export default function App() {
  return (
    <Window>
      <GlobalStyle />
      <TitleBar>
        <TitleLogo>
          <Logo />
        </TitleLogo>
        <TitleText>InfoRapid KnowledgeMap 2013d Demo Version - Softpedia.ikm</TitleText>
        <WindowButtons>
          <WinButton $w={26}>
            <MinGlyph />
          </WinButton>
          <WinButton $w={26}>
            <MaxGlyph />
          </WinButton>
          <CloseButton $w={43}>
            <svg width="11" height="10" viewBox="0 0 11 10">
              <path d="M1 .5l9 9M10 .5l-9 9" stroke="#fff" strokeWidth="2" />
            </svg>
          </CloseButton>
        </WindowButtons>
      </TitleBar>

      <Client>
        <MenuBar>
          <Gripper />
          <MenuStart />
          {menus.map(([label, w]) => (
            <MenuEntry key={label} $w={w}>
              {label}
            </MenuEntry>
          ))}
        </MenuBar>
        <ToolBar>
          <Gripper />
          <Tools tokens={toolOne} />
          <EndMark />
        </ToolBar>
        <ToolBar>
          <Gripper />
          <Tools tokens={toolTwo} />
          <EndMark />
        </ToolBar>

        <Main>
          <Panel $bottom={2}>
            <PanelHead>
              Item List
              <PinIcon />
            </PanelHead>
            <RowsBar>
              <RowsCaption>Rows</RowsCaption>
              <RowsCombo $w={53}>
                <ComboText>2</ComboText>
                <ComboArrow />
              </RowsCombo>
              <RowsSep />
              <Swatch />
            </RowsBar>
            <ListBody>
              <HeadRow>
                <HeadCell>Title</HeadCell>
                <HeadCell>Text</HeadCell>
              </HeadRow>
              <Rows>
                {listRows.map((row, i) => (
                  <Row key={i} $alt={i % 2 === 1}>
                    <TitleCell $pad={row.pad}>
                      {i === 0 ? (
                        <Guide $l={22} $t={25} $h={13} />
                      ) : (
                        <Guide $l={22} $t={0} $h={i === listRows.length - 1 ? 19 : 38} />
                      )}
                      {row.kind === 'doc' && <Guide $l={22} $t={19} $w={10} />}
                      {row.kind === 'folder' && <Guide $l={38} $t={24} $h={14} />}
                      {row.kind === 'sub' && <Guide $l={38} $t={0} $h={19} />}
                      {row.kind === 'sub' && <Guide $l={38} $t={19} $w={10} />}
                      {row.kind === 'root' && <ExpandBox />}
                      {row.kind === 'folder' && <ExpandBox />}
                      {row.kind === 'root' && <FolderGlyph dot />}
                      {row.kind === 'folder' && <FolderGlyph />}
                      {(row.kind === 'doc' || row.kind === 'sub') && <DocGlyph />}
                      {row.text && <ItemLabel $sel={!!row.sel}>{row.text}</ItemLabel>}
                    </TitleCell>
                    <TextCell $sel={!!row.sel} />
                  </Row>
                ))}
              </Rows>
              <ScrollBar>
                <svg width="8" height="8" viewBox="0 0 8 8">
                  <path d="M6 .5L2 4l4 3.5" stroke="#555" strokeWidth="2" fill="none" />
                </svg>
                <ScrollThumb />
                <svg width="8" height="8" viewBox="0 0 8 8">
                  <path d="M2 .5L6 4 2 7.5" stroke="#555" strokeWidth="2" fill="none" />
                </svg>
              </ScrollBar>
              <TabStrip>
                <SideTab $on>
                  <Icon name="treeA" />
                  Ite...
                </SideTab>
                {sideTabs.map(([icon, label]) => (
                  <SideTab key={label}>
                    <Icon name={icon} />
                    {label}
                  </SideTab>
                ))}
              </TabStrip>
            </ListBody>
          </Panel>

          <Panel $bottom={2}>
            <DocTabRow>
              <DocTab>
                <Logo />
                Softpedia.ikm
                <TabClose>✕</TabClose>
              </DocTab>
              <NavArrows>
                <NavTriangle flip />
                <NavTriangle />
              </NavArrows>
            </DocTabRow>
            <DocFrame>
              <Canvas>
                <DemoText>
                  <div>
                    This demo version <HatchedWords>of InfoRapid</HatchedWords> KnowledgeMap may be tested
                  </div>
                  {demoLines.map(line => (
                    <div key={line}>{line}</div>
                  ))}
                </DemoText>
                <Hatch />
                <Handle />
                <Wires width="434" height="618" viewBox="370 139 434 618">
                  {wires.map(d => (
                    <g key={d} fill="none">
                      <path d={d} stroke="#d2d2d2" strokeWidth="3.5" transform="translate(1 1)" />
                      <path d={d} stroke="#8a8a8a" strokeWidth="1" />
                    </g>
                  ))}
                  {wireTips.map(p => (
                    <polygon key={p} points={p} fill="#808080" />
                  ))}
                </Wires>
                <MapNode $x={381} $y={387} $w={88} />
                <MapNode $x={378} $y={407} $w={88} $dark>
                  Test
                </MapNode>
                <MapNode $x={482} $y={407} $w={70} />
                <MapNode $x={381} $y={428} $w={88} />
                <MapNode $x={385} $y={579} $w={88} />
                <MapNode $x={656} $y={551} $w={88} $dark>
                  Softpedia
                </MapNode>
                <MapNode $x={533} $y={616} $w={88} $dark>
                  Tester
                </MapNode>
              </Canvas>
            </DocFrame>
          </Panel>

          <Panel $bottom={0}>
            <PanelHead>
              Diagram Wizard
              <PinIcon />
            </PanelHead>
            <WizardBody>
              {foldsTop.map(label => (
                <Fold key={label}>
                  <FoldArrow />
                  {label}
                </Fold>
              ))}
              <WizardRow>
                <Icon name="treeA" />
                <div>
                  Create new brainstorming
                  <br />
                  session
                </div>
              </WizardRow>
              <WizardLabel>Stylesheet:</WizardLabel>
              <StyleSelect>
                <StyleValue>Orange</StyleValue>
                <StyleArrow />
              </StyleSelect>
              <AutoColor>
                <Check />
                Automatic Item Color
              </AutoColor>
              {foldsBottom.map(label => (
                <Fold key={label}>
                  <FoldArrow />
                  {label}
                </Fold>
              ))}
            </WizardBody>
          </Panel>
        </Main>

        <StatusBar>
          Ready
          <ZoomArea>
            <PageMode>
              <Icon name="page100" />
            </PageMode>
            <PageMode $on>
              <Icon name="pageFit" />
            </PageMode>
            <ZoomValue>50%</ZoomValue>
            <ZoomRound>−</ZoomRound>
            <ZoomTrack>
              <ZoomThumb />
              <ZoomTick />
            </ZoomTrack>
            <ZoomRound>+</ZoomRound>
            <Grip />
          </ZoomArea>
        </StatusBar>
      </Client>

      <MiniBar>
        <MiniRow>
          <Tools tokens={miniOne} />
        </MiniRow>
        <MiniRow>
          <Tools tokens={miniTwo} />
        </MiniRow>
      </MiniBar>

      <PopMenu $x={502} $y={259} $w={360} $gutter={26}>
        {mainMenu.map((item, i) =>
          item.sep ? (
            <PopSep key={i} />
          ) : (
            <PopItem key={i} $on={item.on} $off={item.off} $text={item.on ? 34 : 35}>
              {item.icon && (
                <PopIcon>
                  <Icon name={item.icon} />
                </PopIcon>
              )}
              {item.text}
              {item.sub && <SubArrow />}
            </PopItem>
          ),
        )}
      </PopMenu>

      <PopMenu $x={862} $y={262} $w={159} $gutter={26}>
        {subMenu.map(item => (
          <PopItem key={item.text} $text={35}>
            <PopIcon>
              <Icon name={item.icon} />
            </PopIcon>
            {item.text}
          </PopItem>
        ))}
      </PopMenu>

      <Watermark>
        SOFTPEDIA
        <WatermarkUrl>www.softpedia.com</WatermarkUrl>
      </Watermark>
    </Window>
  );
}
